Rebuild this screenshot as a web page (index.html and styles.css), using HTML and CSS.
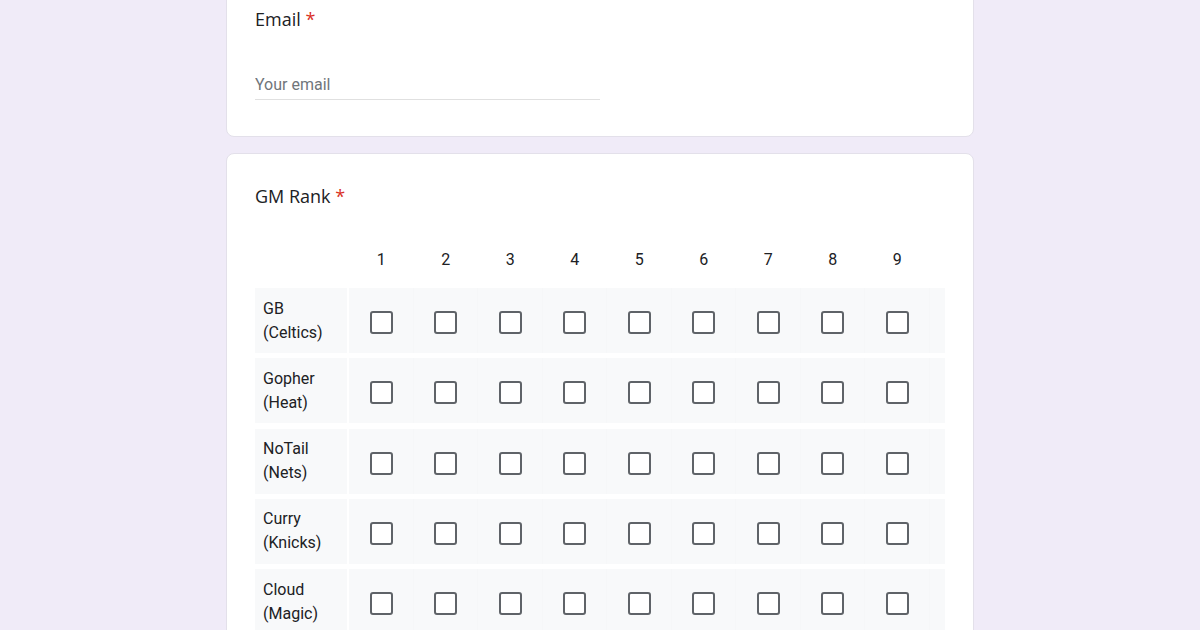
FILE: index.html
```html
<!DOCTYPE html>
<html lang="en">
<head>
    <meta charset="UTF-8">
    <meta name="viewport" content="width=device-width, initial-scale=1.0">
    <title>GM Rank</title>
    <link rel="stylesheet" href="styles.css">
</head>
<body>
    <div class="form">
        <div class="card card-email">
            <div class="question-title">Email <span class="required">*</span></div>
            <input type="email" class="text-input" placeholder="Your email">
        </div>

        <div class="card card-grid">
            <div class="question-title">GM Rank <span class="required">*</span></div>
            <div class="grid">
                <div class="grid-row grid-head">
                    <div class="row-label"></div>
                    <div class="cell">1</div>
                    <div class="cell">2</div>
                    <div class="cell">3</div>
                    <div class="cell">4</div>
                    <div class="cell">5</div>
                    <div class="cell">6</div>
                    <div class="cell">7</div>
                    <div class="cell">8</div>
                    <div class="cell">9</div>
                    <div class="cell-end"></div>
                </div>
            </div>
            <div class="grid" id="gridBody"></div>
        </div>
    </div>

    <script>
        const players = ["GB (Celtics)", "Gopher (Heat)", "NoTail (Nets)", "Curry (Knicks)", "Cloud (Magic)"];
        const gridBody = document.getElementById("gridBody");

        players.forEach(function (name) {
            const row = document.createElement("div");
            row.className = "grid-row";

            const label = document.createElement("div");
            label.className = "row-label";
            label.textContent = name;
            row.appendChild(label);

            for (let i = 1; i <= 9; i++) {
                const cell = document.createElement("div");
                cell.className = "cell";
                const box = document.createElement("span");
                box.className = "checkbox";
                cell.appendChild(box);
                row.appendChild(cell);
            }

            const end = document.createElement("div");
            end.className = "cell-end";
            row.appendChild(end);

            gridBody.appendChild(row);
        });
    </script>
</body>
</html>
```

FILE: styles.css
```css
body {
    margin: 0;
    background-color: #f0ebf8;
    font-family: Roboto, "Liberation Sans", sans-serif;
    color: #202124;
}
.form {
    width: 748px;
    margin: -20px auto 0;
}
.card {
    background-color: #fff;
    border: 1px solid #e3e0ea;
    border-radius: 8px;
    padding: 26px 28px 36px;
    margin-bottom: 16px;
}
.card-grid {
    padding-top: 30px;
}
.question-title {
    font-family: "Open Sans", Roboto, sans-serif;
    font-size: 18px;
    line-height: 24px;
}
.required {
    color: #d93025;
}
.text-input {
    display: block;
    width: 345px;
    margin-top: 42px;
    padding: 0 0 2px;
    border: none;
    border-bottom: 1px solid #e0e0e0;
    font-family: Roboto, sans-serif;
    font-size: 16px;
    line-height: 24px;
    color: #202124;
    outline: none;
    background: transparent;
}
.text-input::placeholder {
    color: #70757a;
}
.grid-head {
    height: 40px;
    margin-top: 32px;
    margin-bottom: 8px;
}
.grid-row {
    display: grid;
    grid-template-columns: 94px repeat(9, 64.5px) 15px;
    align-items: stretch;
    font-size: 16px;
    line-height: 24px;
}
.grid .grid-row:not(.grid-head) {
    height: 65px;
    margin-bottom: 5.3px;
    background-color: #f8f9fa;
}
.row-label {
    display: flex;
    align-items: center;
    padding: 0 8px;
    border-right: 2px solid #fff;
}
.grid-head .row-label {
    border-right: none;
}
.cell {
    display: flex;
    align-items: center;
    justify-content: center;
    border-right: 1px solid #f6f7f8;
}
.grid-head .cell {
    border-right: none;
}
.checkbox {
    box-sizing: border-box;
    width: 23px;
    height: 23px;
    margin: 4px 0 0 1px;
    border: 2px solid #5f6368;
    border-radius: 3px;
    background-color: #fff;
}
```
